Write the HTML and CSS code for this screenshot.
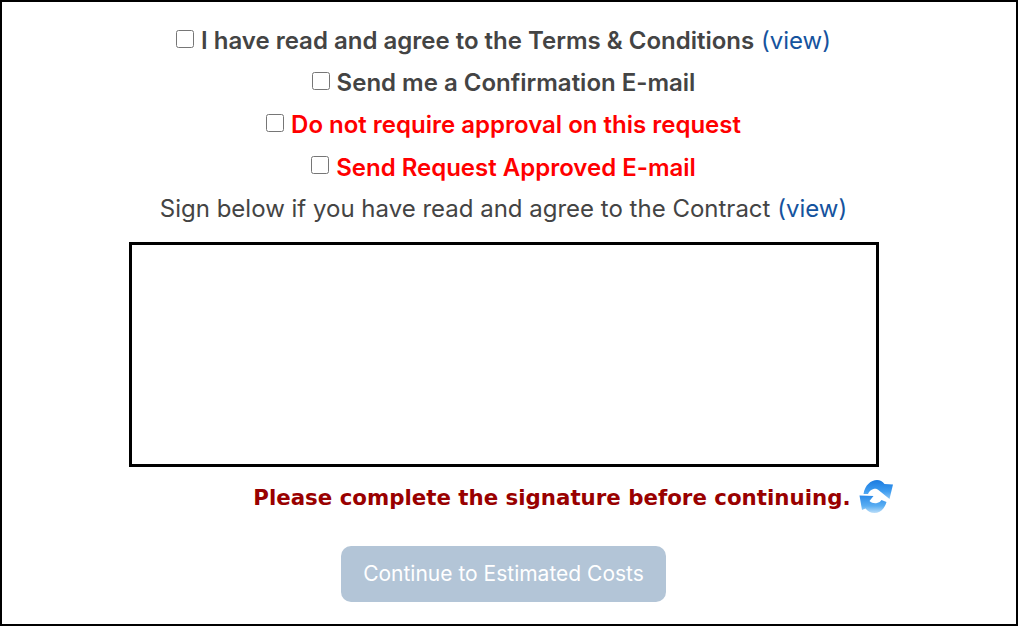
FILE: index.html
```html
<!DOCTYPE html>
<html lang="en">
  <head>
    <meta charset="UTF-8" />
    <title>Sign Request</title>
    <link rel="stylesheet" href="styles.css">
  </head>
  <body>
    <div class="frame">
      <!-- checkboxes -->
      <div class="check-row">
        <label><input type="checkbox" /><b>I have read and agree to the Terms &amp; Conditions</b></label>
        <a href="#">(view)</a>
      </div>
      <div class="check-row">
        <label><input type="checkbox" /><b>Send me a Confirmation E-mail</b></label>
      </div>
      <div class="check-row admin">
        <label><input type="checkbox" /><b>Do not require approval on this request</b></label>
      </div>
      <div class="check-row admin">
        <label><input type="checkbox" /><b>Send Request Approved E-mail</b></label>
      </div>
      <div class="sign-label">Sign below if you have read and agree to the Contract <a href="#">(view)</a></div>
      <!-- signature box -->
      <div class="sign-box"></div>
      <div class="sign-msg">
        <span>Please complete the signature before continuing.</span>
        <svg class="refresh" width="36" height="36" viewBox="0 0 36 36">
          <defs>
            <linearGradient id="blue-top" x1="0" y1="0" x2="0" y2="1">
              <stop offset="0" stop-color="#1b7be0" />
              <stop offset="0.6" stop-color="#3f9df0" />
              <stop offset="1" stop-color="#8cc6f5" />
            </linearGradient>
            <linearGradient id="blue-bottom" x1="0" y1="0" x2="0" y2="1">
              <stop offset="0" stop-color="#2b8ae8" />
              <stop offset="0.6" stop-color="#5aaef2" />
              <stop offset="1" stop-color="#bcdef9" />
            </linearGradient>
          </defs>
          <path d="M4.5 15 C6 6 12 1 18 1 C21 1 23.5 2.5 25.5 5 L34 5.5 L30.5 20 L20 11.5 C18.5 10 16.5 9.5 14.5 10 C12 10.5 10 12.5 9 15 Z" fill="url(#blue-top)" />
          <path d="M0.5 16.5 L14.5 17 L10.5 22 C12.5 24 15.5 24.5 18 24 C20 23.5 21.5 22.5 22.5 21 L27.5 23 C25.5 30 21 34 15.5 34 C11.5 34 8.5 32 6.5 29.5 L3 31 Z" fill="url(#blue-bottom)" />
        </svg>
      </div>
      <button class="continue" disabled>Continue to Estimated Costs</button>
    </div>
  </body>
</html>
```

FILE: styles.css
```css
html,
body {
  margin: 0;
  height: 100%;
  background-color: #fff;
}

.frame {
  box-sizing: border-box;
  width: 1018px;
  height: 626px;
  border: 2px solid #000;
  padding: 19px 11px 0 0;
  display: flex;
  flex-direction: column;
  align-items: center;
  font-family: Inter, "Liberation Sans", sans-serif;
  font-size: 24px;
  color: #444;
}

.check-row {
  height: 42.2px;
  line-height: 40px;
  white-space: nowrap;
}

.check-row b {
  font-weight: 600;
}

.check-row input {
  width: 18px;
  height: 18px;
  margin: 0 7px 0 0;
  position: relative;
  top: -1.5px;
}

.admin {
  color: #f00;
}

a {
  color: #15539e;
  text-decoration: none;
}

.sign-label {
  height: 38px;
  line-height: 38px;
  white-space: nowrap;
}

.sign-box {
  box-sizing: border-box;
  width: 750px;
  height: 225px;
  margin-top: 14.4px;
  border: 3px solid #000;
  flex-shrink: 0;
}

.sign-msg {
  width: 750px;
  height: 60px;
  margin-left: 32px;
  display: flex;
  justify-content: flex-end;
  align-items: center;
  gap: 8px;
  font-family: "DejaVu Sans", Verdana, sans-serif;
  font-weight: bold;
  font-size: 21.33px;
  color: #990000;
  white-space: nowrap;
}

.refresh {
  flex-shrink: 0;
}

.continue {
  width: 325px;
  height: 56px;
  margin-top: 19px;
  padding-bottom: 2px;
  border: none;
  border-radius: 10px;
  background-color: #b3c5d7;
  color: #fff;
  font-family: Inter, "Liberation Sans", sans-serif;
  font-size: 21px;
}
```
